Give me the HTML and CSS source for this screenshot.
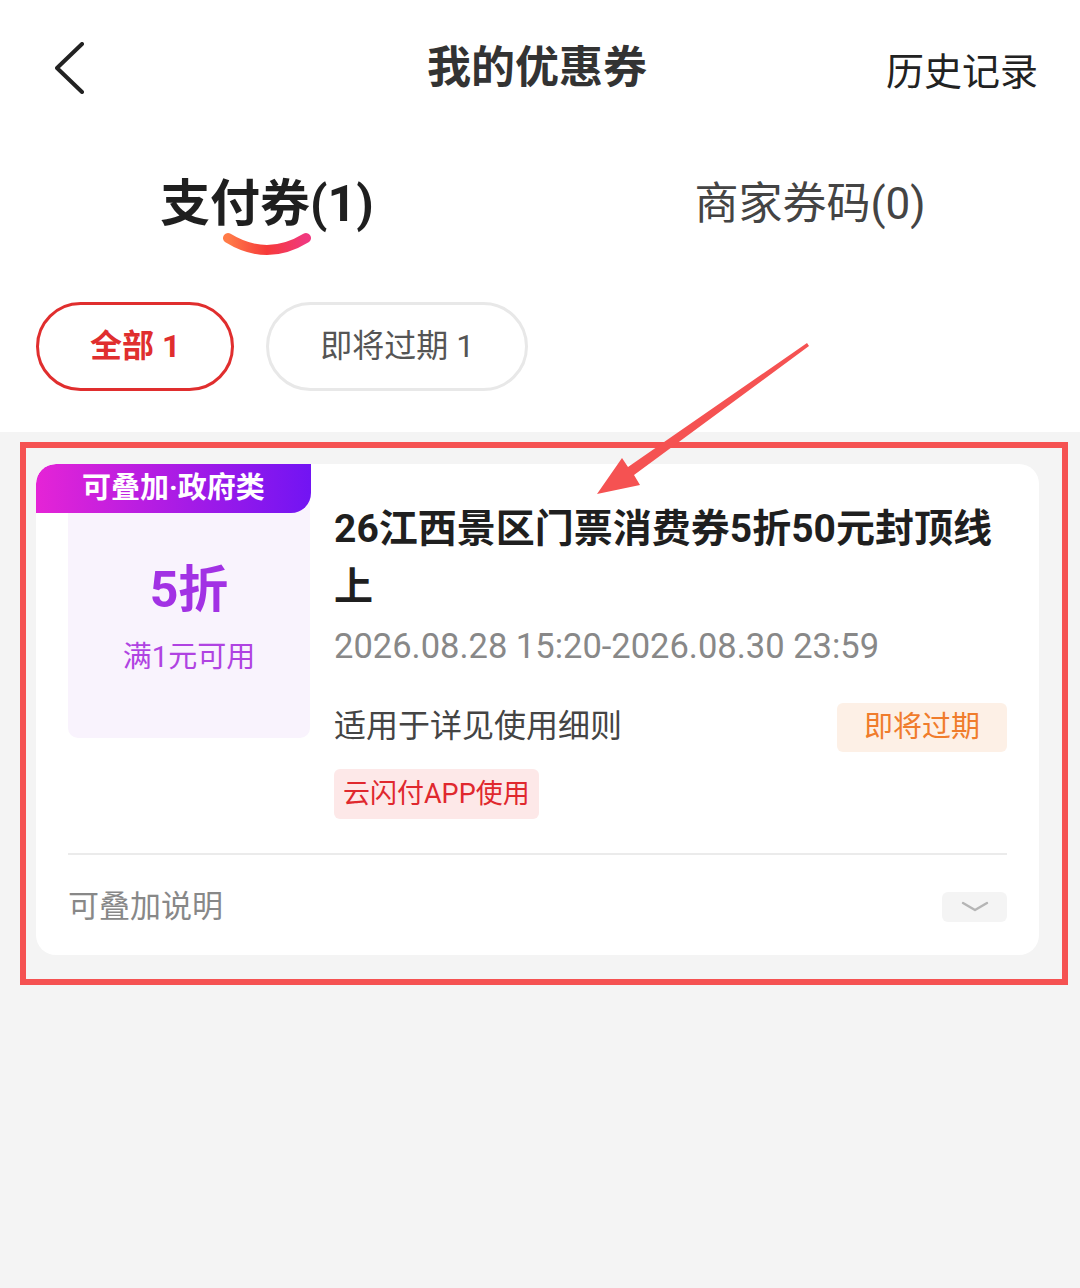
FILE: index.html
```html
<!DOCTYPE html>
<html lang="zh-CN">
<head>
    <meta charset="UTF-8">
    <meta name="viewport" content="width=device-width, initial-scale=1.0">
    <title>我的优惠券</title>
    <link rel="stylesheet" href="styles.css">
</head>
<body>
    <div class="page">
        <div class="top">
            <div class="header">
                <div class="back">
                    <svg width="30" height="52" viewBox="0 0 30 52">
                        <polyline points="27,2 2,26 27,50" fill="none" stroke="#222" stroke-width="4" stroke-linecap="round" stroke-linejoin="round"/>
                    </svg>
                </div>
                <h1 class="title">我的优惠券</h1>
                <div class="history">历史记录</div>
            </div>

            <div class="tabs">
                <div class="tab active">
                    <span>支付券(1)</span>
                    <svg class="smile" width="90" height="28" viewBox="0 0 90 28">
                        <defs>
                            <linearGradient id="smileGrad" x1="0" y1="0" x2="1" y2="0">
                                <stop offset="0" stop-color="#ff7b48"/>
                                <stop offset="0.5" stop-color="#f63a3a"/>
                                <stop offset="1" stop-color="#f0387e"/>
                            </linearGradient>
                        </defs>
                        <path d="M6 7 Q45 31 84 7" fill="none" stroke="url(#smileGrad)" stroke-width="10" stroke-linecap="round"/>
                    </svg>
                </div>
                <div class="tab">商家券码(0)</div>
            </div>

            <div class="filters">
                <div class="pill on">全部 1</div>
                <div class="pill">即将过期 1</div>
            </div>
        </div>

        <div class="list">
            <div class="card">
                <div class="badge">可叠加·政府类</div>
                <div class="card-body">
                    <div class="amount">
                        <div class="discount">5折</div>
                        <div class="limit">满1元可用</div>
                    </div>
                    <div class="info">
                        <div class="name">26江西景区门票消费券5折50元封顶线上</div>
                        <div class="date">2026.08.28 15:20-2026.08.30 23:59</div>
                        <div class="scope-row">
                            <span class="scope">适用于详见使用细则</span>
                            <span class="tag expire">即将过期</span>
                        </div>
                        <span class="tag app">云闪付APP使用</span>
                    </div>
                </div>
                <div class="card-foot">
                    <span>可叠加说明</span>
                    <span class="more">
                        <svg width="28" height="12" viewBox="0 0 28 12">
                            <polyline points="2,2 14,9 26,2" fill="none" stroke="#b5b5b5" stroke-width="2.4" stroke-linecap="round" stroke-linejoin="round"/>
                        </svg>
                    </span>
                </div>
            </div>
        </div>

        <!-- annotation drawn over the screenshot -->
        <div class="mark-box"></div>
        <svg class="mark-arrow" width="1080" height="1288" viewBox="0 0 1080 1288">
            <polygon points="807,343 809,346 634,475 640,485 597,494 622,458 628,467" fill="#f55252"/>
        </svg>
    </div>
</body>
</html>
```

FILE: styles.css
```css
* {
    margin: 0;
    padding: 0;
    box-sizing: border-box;
}

body {
    font-family: Roboto, "Noto Sans CJK SC", sans-serif;
    background-color: #f4f4f4;
    color: #222;
}

.page {
    position: relative;
    min-height: 1288px;
}

.top {
    background-color: white;
    padding-bottom: 41px;
}

.header {
    height: 136px;
    display: grid;
    grid-template-columns: 1fr auto 1fr;
    align-items: center;
    padding: 0 42px;
}

.back {
    margin-left: 13px;
}

.back svg {
    display: block;
}

.title {
    font-size: 44px;
    font-weight: bold;
    color: #333;
    line-height: 60px;
    margin-right: 6px;
}

.history {
    justify-self: end;
    font-size: 38px;
    color: #222;
}

.tabs {
    display: grid;
    grid-template-columns: 1fr 1fr;
    padding-top: 38px;
    align-items: start;
}

.tab {
    text-align: center;
    font-size: 44px;
    line-height: 60px;
    color: #444;
}

.tab.active {
    font-size: 50px;
    font-weight: bold;
    color: #1f1f1f;
    padding-right: 6px;
}

.tab.active span {
    display: block;
}

.smile {
    display: block;
    margin: -3px auto 0;
}

.filters {
    display: flex;
    gap: 32px;
    padding-left: 36px;
    margin-top: 43px;
}

.pill {
    height: 89px;
    line-height: 83px;
    padding: 0 51px;
    border: 3px solid #e8e8e8;
    border-radius: 45px;
    font-size: 32px;
    color: #555;
}

.pill.on {
    border-color: #e02e2e;
    color: #e02e2e;
    font-weight: bold;
}

.list {
    padding: 32px 41px 0 36px;
}

.card {
    position: relative;
    background-color: white;
    border-radius: 20px;
    overflow: hidden;
}

.badge {
    position: absolute;
    top: 0;
    left: 0;
    width: 275px;
    height: 49px;
    line-height: 49px;
    text-align: center;
    font-size: 29px;
    font-weight: bold;
    color: white;
    background: linear-gradient(90deg, #e524d6, #7214f3);
    border-radius: 20px 0 20px 0;
}

.card-body {
    display: flex;
    gap: 24px;
    padding: 0 32px;
}

.amount {
    width: 242px;
    height: 274px;
    flex-shrink: 0;
    background-color: #f9f3fd;
    border-radius: 0 0 10px 10px;
    text-align: center;
    padding-top: 96px;
}

.discount {
    font-size: 50px;
    font-weight: bold;
    line-height: 60px;
    color: #a232e4;
}

.limit {
    margin-top: 19px;
    font-size: 29px;
    line-height: 36px;
    color: #b043e2;
}

.info {
    flex: 1;
    padding-top: 36px;
}

.name {
    font-size: 39px;
    font-weight: bold;
    line-height: 58px;
    color: #1f1f1f;
}

.date {
    margin-top: 7px;
    font-size: 34.5px;
    line-height: 46px;
    color: #888;
}

.scope-row {
    display: flex;
    justify-content: space-between;
    align-items: center;
    margin-top: 34px;
}

.scope {
    font-size: 32px;
    line-height: 40px;
    color: #444;
    margin-top: -4px;
}

.tag {
    display: inline-block;
    border-radius: 6px;
}

.tag.expire {
    height: 49px;
    line-height: 49px;
    padding: 0 27px;
    font-size: 29px;
    color: #f07c2c;
    background-color: #fdf0e6;
}

.tag.app {
    margin-top: 17px;
    height: 50px;
    line-height: 50px;
    padding: 0 9px;
    font-size: 27px;
    color: #e0282e;
    background-color: #fde8e8;
}

.card-foot {
    margin: 34px 32px 0;
    border-top: 2px solid #ebebeb;
    padding: 36px 0 32px;
    display: flex;
    justify-content: space-between;
    align-items: center;
    font-size: 31px;
    line-height: 32px;
    color: #888;
}

.more {
    width: 65px;
    height: 30px;
    background-color: #f4f4f4;
    border-radius: 6px;
    display: flex;
    align-items: center;
    justify-content: center;
}

.mark-box {
    position: absolute;
    left: 20px;
    top: 442px;
    width: 1048px;
    height: 543px;
    border: 6px solid #f55252;
    pointer-events: none;
}

.mark-arrow {
    position: absolute;
    left: 0;
    top: 0;
    pointer-events: none;
}
```
